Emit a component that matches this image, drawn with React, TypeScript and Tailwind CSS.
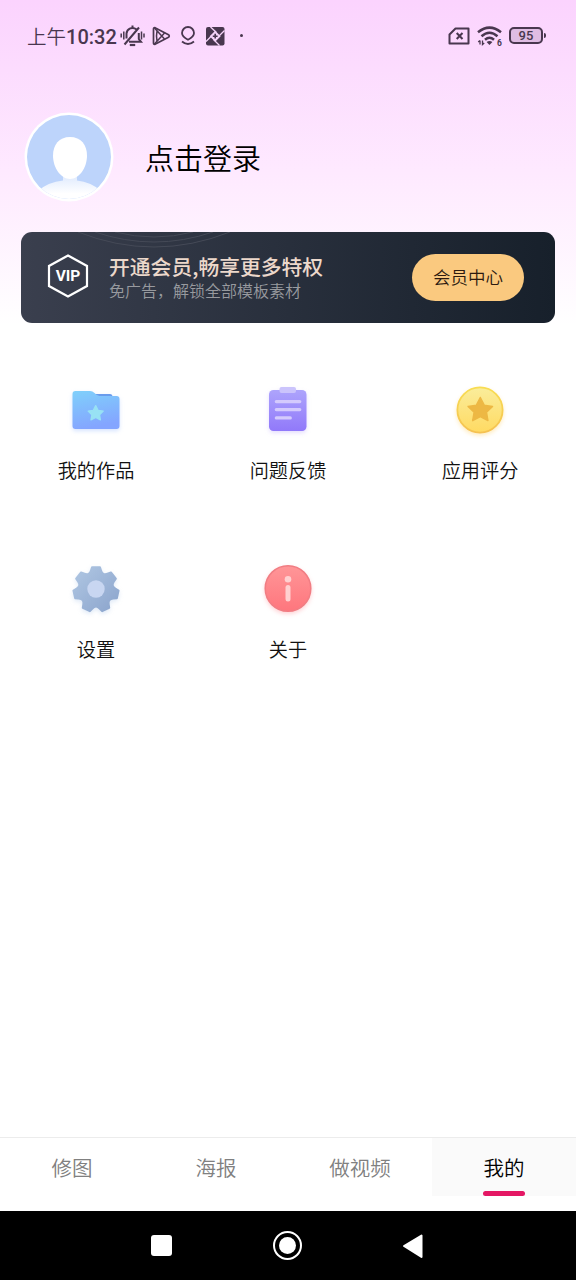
import React from 'react';

const menuItems = [
  { label: '我的作品', icon: FolderIcon },
  { label: '问题反馈', icon: ClipboardIcon },
  { label: '应用评分', icon: CoinIcon },
  { label: '设置', icon: GearIcon },
  { label: '关于', icon: InfoIcon },
];

const tabs = ['修图', '海报', '做视频', '我的'];

const STAR = 'M0 -12.5 L3.9 -4.8 L12.2 -3.6 L6.2 2.3 L7.6 10.6 L0 6.7 L-7.6 10.6 L-6.2 2.3 L-12.2 -3.6 L-3.9 -4.8 Z';

// Seven teeth joined by shallow curves, centred on 0,0
function gearPath() {
  const point = (r: number, deg: number) => {
    const a = ((deg - 90) * Math.PI) / 180;
    return `${(r * Math.cos(a)).toFixed(2)} ${(r * Math.sin(a)).toFixed(2)}`;
  };
  let d = '';
  for (let i = 0; i < 7; i++) {
    const c = (i * 360) / 7;
    d += `${i === 0 ? 'M' : 'L'}${point(22.6, c - 10)} L${point(22.6, c + 10)} `;
    d += `L${point(19.4, c + 15)} Q${point(15.2, c + 25.7)} ${point(19.4, c + 36.4)} `;
  }
  return d + 'Z';
}

function FolderIcon() {
  return (
    <svg className="h-16 w-16 drop-shadow-[0_2px_2px_rgba(120,165,255,0.3)]" viewBox="0 0 64 64">
      <defs>
        <linearGradient id="folder" x1="0" y1="0" x2="0.25" y2="1">
          <stop offset="0" stopColor="#7fd0fb" />
          <stop offset="1" stopColor="#84a5ff" />
        </linearGradient>
      </defs>
      <path d="M28 18 q0 -2 2 -2 h16 q2 0 2.500 2 v5 h-20 z" fill="#6a9cec" />
      <path d="M8.500 16 q0 -3 3 -3 h14.500 q2.500 0 4.500 2.100 q2.500 2.900 5 2.900 h17 q3 0 3 3 v27 q0 3 -3 3 h-41 q-3 0 -3 -3 z" fill="url(#folder)" />
      <path d={STAR} transform="translate(31.700 35.300) scale(.62)" fill="#98e2f4" stroke="#98e2f4" strokeWidth="2" strokeLinejoin="round" />
    </svg>
  );
}

function ClipboardIcon() {
  return (
    <svg className="h-16 w-16 drop-shadow-[0_2px_2px_rgba(150,125,250,0.25)]" viewBox="0 0 64 64">
      <defs>
        <linearGradient id="clipboard" x1="0" y1="0" x2="0" y2="1">
          <stop offset="0" stopColor="#ada4fc" />
          <stop offset="1" stopColor="#9179fa" />
        </linearGradient>
      </defs>
      <rect x="13" y="12" width="37.500" height="41" rx="4.500" fill="url(#clipboard)" />
      <rect x="23.500" y="9" width="16.500" height="6" rx="2" fill="#cbc4fc" />
      <g stroke="#d4cafd" strokeWidth="3.200" strokeLinecap="round">
        <path d="M20.300 23.600h23.500M20.300 31.600h23.500M20.300 39.900h14" />
      </g>
    </svg>
  );
}

function CoinIcon() {
  return (
    <svg className="h-16 w-16 drop-shadow-[0_2px_2px_rgba(255,205,90,0.4)]" viewBox="0 0 64 64">
      <defs>
        <linearGradient id="coin" x1="0" y1="0" x2="0" y2="1">
          <stop offset="0" stopColor="#faed9b" />
          <stop offset="1" stopColor="#ffda62" />
        </linearGradient>
        <linearGradient id="coinEdge" x1="0" y1="0" x2="0" y2="1">
          <stop offset="0" stopColor="#f8dd52" />
          <stop offset="1" stopColor="#f5c151" />
        </linearGradient>
      </defs>
      <circle cx="32" cy="32" r="22.600" fill="url(#coin)" stroke="url(#coinEdge)" strokeWidth="1.800" />
      <path d={STAR} transform="translate(32.300 32)" fill="#edb844" stroke="#edb844" strokeWidth="1.500" strokeLinejoin="round" />
    </svg>
  );
}

function GearIcon() {
  return (
    <svg className="h-16 w-16 drop-shadow-[0_2px_2px_rgba(130,170,225,0.25)]" viewBox="0 0 64 64">
      <defs>
        <linearGradient id="gear" x1="0" y1="0" x2="1" y2="1">
          <stop offset="0" stopColor="#b0c7e3" />
          <stop offset="1" stopColor="#8ba4cc" />
        </linearGradient>
      </defs>
      <path d={gearPath()} transform="translate(32 32.400)" fill="url(#gear)" stroke="url(#gear)" strokeWidth="2" strokeLinejoin="round" />
      <circle cx="32" cy="32" r="8.700" fill="#c8d6f1" />
    </svg>
  );
}

function InfoIcon() {
  return (
    <svg className="h-16 w-16 drop-shadow-[0_2px_2px_rgba(255,110,120,0.3)]" viewBox="0 0 64 64">
      <defs>
        <linearGradient id="info" x1="0" y1="0" x2="0" y2="1">
          <stop offset="0" stopColor="#ff9698" />
          <stop offset="1" stopColor="#fe767d" />
        </linearGradient>
      </defs>
      <circle cx="32" cy="31.500" r="22.800" fill="url(#info)" stroke="#f17d83" strokeWidth="1.500" />
      <circle cx="32" cy="22.300" r="3.300" fill="#ffd0d0" />
      <rect x="29.500" y="28" width="5" height="16.500" rx="2.500" fill="#ffd0d0" />
    </svg>
  );
}

function StatusBar() {
  return (
    <div className="flex h-[71px] items-center justify-between pr-[30px] pl-[27px] text-[#49374f]">
      <div className="flex items-center">
        <span className="w-[93px] pt-px text-[19.500px] leading-6 font-[350] whitespace-nowrap">
          上午<span className="font-[Roboto] text-[20px] font-medium">10:32</span>
        </span>
        <svg className="h-6 w-[25px]" viewBox="0 0 25 24" fill="none" stroke="currentColor" strokeWidth="2">
          <path d="M6.500 14.500 V9.500 a6 6 0 0 1 10 -4 M18.800 9 V15 l2.200 2.800 H9 M12.500 1.500 V4 M4.500 20.500 L19 3.500" />
          <path d="M9.800 21h5.400" strokeWidth="2.200" />
          <path d="M1.200 9.500v4M3.800 7.500v8M21.500 7.500v8M24 9.500v4" strokeWidth="1.500" />
        </svg>
        <svg className="ml-[7px] h-6 w-[19px]" viewBox="0 0 19 24" fill="none" stroke="currentColor" strokeWidth="1.700" strokeLinejoin="round">
          <path d="M3 3.700 L16.500 10.700 Q18 12 16.500 13.300 L3 20.300 Q1.500 20.500 1.500 19 V5 Q1.500 3.500 3 3.700 Z" />
          <path d="M2.500 4 L12.500 15 M2.500 20 L12.500 9 M5 7 Q4 12 5 17" strokeWidth="1.500" />
        </svg>
        <svg className="ml-[9px] h-6 w-4" viewBox="0 0 16 24" fill="none" stroke="currentColor" strokeWidth="1.800">
          <path d="M8 15.800 C5.500 14.500 2 12.500 2 9 A6 6 0 0 1 14 9 C14 12.500 10.500 14.500 8 15.800 Z" />
          <path d="M2 17.500 Q8 22.500 14 17.500" />
        </svg>
        <svg className="ml-[9px] h-6 w-5" viewBox="0 0 20 24">
          <rect x="1" y="3" width="18.500" height="18.500" rx="2" fill="currentColor" />
          <path d="M10.200 6.700 L15.700 12.200 L10.200 17.700 L4.700 12.200 Z" fill="#f5d4f8" />
          <path d="M5.500 3 L11.500 8.500 M19.500 6.500 L13.500 12.500 M14.500 21.500 L8.500 15.500 M1 17.500 L7 11.500" stroke="#f5d4f8" strokeWidth="1.300" />
          <path d="M10.200 9.800v4.800M7.800 12.200h4.800" stroke="currentColor" strokeWidth="1.600" />
        </svg>
        <span className="ml-[15px] h-[3px] w-[3px] rounded-full bg-[#49374f]" />
      </div>
      <div className="flex items-center">
        <svg className="h-5 w-[22px]" viewBox="0 0 22 20" fill="none" stroke="currentColor" strokeWidth="2">
          <path d="M7.500 2.500 H20.500 V17.500 H1.500 V8.500 Z" strokeLinejoin="round" />
          <path d="M8.700 7 L14.500 13 M14.500 7 L8.700 13" />
        </svg>
        <svg className="ml-[7px] h-5 w-[26px]" viewBox="0 0 26 20" fill="none" stroke="currentColor" strokeWidth="2.500">
          <path d="M1 6.300 Q12.500 -3 24 6.300 M4.500 10.200 Q12.500 3.300 20.500 10.200 M8 13.800 Q12.500 9.800 17 13.800" />
          <path d="M9.600 16 Q12.500 13.800 15.400 16 L12.500 19 Z" fill="currentColor" stroke="none" />
          <path d="M3 14.500 V18.500 M1.200 16 L3 14.500 M5.500 14.500 V18.500 L7.200 17" strokeWidth="1.300" />
          <text x="20" y="19.500" fill="currentColor" stroke="none" fontFamily="Roboto" fontSize="8.500" fontWeight="700">6</text>
        </svg>
        <div className="ml-[6px] flex h-[17px] w-[34px] items-center justify-center rounded-[5px] border-2 border-current bg-[#dfbce3] font-[Roboto] text-[13px] leading-none font-medium">
          95
        </div>
        <span className="ml-px h-[5px] w-[2px] rounded-r bg-current" />
      </div>
    </div>
  );
}

function Profile() {
  return (
    <div className="mt-10 flex h-[92px] items-center pl-6">
      <svg className="h-[90px] w-[90px]" viewBox="0 0 90 90">
        <defs>
          <clipPath id="avatarClip">
            <circle cx="45" cy="45" r="42" />
          </clipPath>
          <linearGradient id="shoulders" x1="0" y1="0" x2="0" y2="1">
            <stop offset="0" stopColor="#dce8fd" />
            <stop offset="0.700" stopColor="#fff" />
          </linearGradient>
        </defs>
        <circle cx="45" cy="45" r="44.500" fill="#fff" />
        <g clipPath="url(#avatarClip)">
          <rect width="90" height="90" fill="#bdd4fb" />
          <path d="M14 79 Q24 70 39 68.500 V62 H53 V68.500 Q67 70 77 79 V90 H14 Z" fill="url(#shoulders)" />
          <path d="M46 25 C57 25 63 33 63 43.500 C63 56 55 67 46 67 C37 67 29 56 29 43.500 C29 33 35 25 46 25 Z" fill="#fff" />
        </g>
      </svg>
      <span className="ml-[31px] text-[29px] leading-10 font-[350] text-black">点击登录</span>
    </div>
  );
}

function VipBanner() {
  return (
    <div className="relative mx-[21px] mt-[29px] flex h-[91px] items-center overflow-hidden rounded-[11px] bg-gradient-to-r from-[#3a3f4e] to-[#17202b] pr-[31px] pl-[26px]">
      <svg className="absolute top-0 left-[45px] h-5 w-[180px]" viewBox="0 0 180 20" fill="none" stroke="#454a57" strokeWidth="1">
        <path d="M12 0 Q88 30 164 0 M29 0 Q88 20 147 0 M49 0 Q88 10 127 0" />
      </svg>
      <svg className="mb-1 h-[44px] w-[42px]" viewBox="0 0 42 44">
        <path d="M21 1.500 L40 12 V32 L21 42.500 L2 32 V12 Z" fill="none" stroke="#fff" strokeWidth="2.200" />
        <text x="21" y="27.300" textAnchor="middle" fill="#fff" fontFamily="Roboto" fontSize="15.500" fontWeight="700">VIP</text>
      </svg>
      <div className="ml-5 flex flex-col">
        <span className="text-[20.800px] leading-6 font-medium text-[#ecd8cb]">开通会员,畅享更多特权</span>
        <span className="text-base leading-6 font-[350] text-[#989a9f]">免广告，解锁全部模板素材</span>
      </div>
      <button className="ml-auto h-[47px] w-28 rounded-full bg-[#fac97f] text-[17.500px] font-[350] text-[#2c1a10]">会员中心</button>
    </div>
  );
}

function BottomTabs() {
  return (
    <div className="mt-auto grid h-[74px] grid-cols-4 border-t border-[#ececec] bg-white">
      {tabs.map((tab, i) => {
        const active = i === tabs.length - 1;
        return (
          <div
            key={tab}
            className={`flex h-[58px] flex-col items-center justify-between pt-[14px] text-[20.500px] leading-[30px] font-[350] ${
              active ? 'bg-[#fafafa] text-black' : 'text-[#808080]'
            }`}
          >
            {tab}
            {active && <span className="h-[5px] w-[42px] rounded-full bg-[#e41764]" />}
          </div>
        );
      })}
    </div>
  );
}

function SystemNav() {
  return (
    <div className="flex h-[69px] items-center bg-black pl-[151px]">
      <span className="h-[21px] w-[21px] rounded-[3px] bg-white" />
      <span className="ml-[101px] flex h-[29px] w-[29px] items-center justify-center rounded-full border-[2.500px] border-white">
        <span className="h-[17px] w-[17px] rounded-full bg-white" />
      </span>
      <svg className="ml-[100px] h-[26px] w-[22px]" viewBox="0 0 22 26">
        <path d="M2 13 L19.500 2.500 V24 Z" fill="#fff" stroke="#fff" strokeWidth="2" strokeLinejoin="round" />
      </svg>
    </div>
  );
}

export default function App() {
  return (
    <div className="flex h-[1280px] w-[576px] flex-col overflow-hidden bg-white bg-[linear-gradient(to_bottom,#fbd3fe_0px,#fcdcfe_70px,#fee9ff_170px,#fff_325px)] font-['Noto_Sans_CJK_SC',sans-serif]">
      <StatusBar />
      <Profile />
      <VipBanner />
      <div className="mt-[55px] grid grid-cols-3">
        {menuItems.map(({ label, icon: Icon }) => (
          <div key={label} className="flex h-[179px] flex-col items-center">
            <Icon />
            <span className="mt-[14px] text-[19.200px] leading-7 font-[350] text-[#111]">{label}</span>
          </div>
        ))}
      </div>
      <BottomTabs />
      <SystemNav />
    </div>
  );
}
